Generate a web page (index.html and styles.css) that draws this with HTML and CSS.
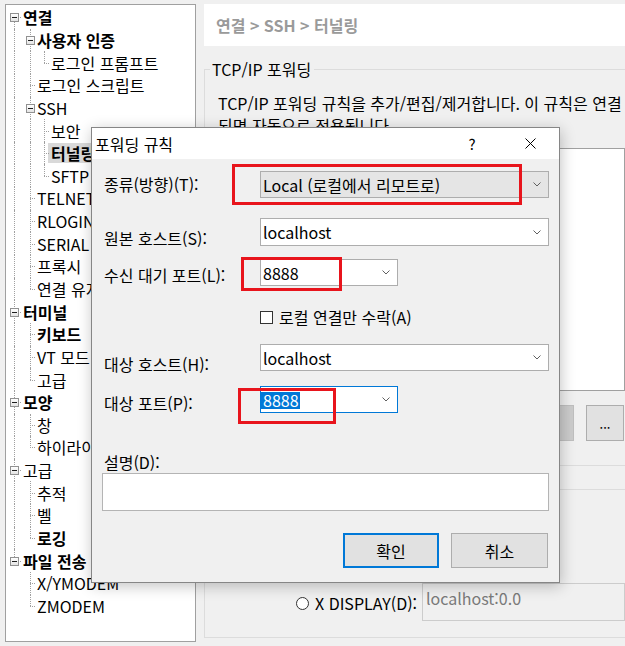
FILE: index.html
```html
<!DOCTYPE html>
<html lang="ko">
<head>
<meta charset="utf-8">
<title>터널링</title>
<link rel="stylesheet" href="styles.css">
</head>
<body>
<div class="window">
  <aside class="tree">
    <div class="r b"><span class="c c0 first"><i class="box"></i></span><span class="t">연결</span></div>
    <div class="r b"><span class="c c0 pipe"></span><span class="c c1 tee"><i class="box"></i></span><span class="t">사용자 인증</span></div>
    <div class="r"><span class="c c0 pipe"></span><span class="c c1 pipe"></span><span class="c c2 ell"></span><span class="t">로그인 프롬프트</span></div>
    <div class="r"><span class="c c0 pipe"></span><span class="c c1 tee"></span><span class="t">로그인 스크립트</span></div>
    <div class="r"><span class="c c0 pipe"></span><span class="c c1 tee"><i class="box"></i></span><span class="t">SSH</span></div>
    <div class="r"><span class="c c0 pipe"></span><span class="c c1 pipe"></span><span class="c c2 tee"></span><span class="t">보안</span></div>
    <div class="r b sel"><span class="c c0 pipe"></span><span class="c c1 pipe"></span><span class="c c2 tee"></span><span class="t">터널링</span></div>
    <div class="r"><span class="c c0 pipe"></span><span class="c c1 pipe"></span><span class="c c2 ell"></span><span class="t">SFTP</span></div>
    <div class="r"><span class="c c0 pipe"></span><span class="c c1 tee"></span><span class="t">TELNET</span></div>
    <div class="r"><span class="c c0 pipe"></span><span class="c c1 tee"></span><span class="t">RLOGIN</span></div>
    <div class="r"><span class="c c0 pipe"></span><span class="c c1 tee"></span><span class="t">SERIAL</span></div>
    <div class="r"><span class="c c0 pipe"></span><span class="c c1 tee"></span><span class="t">프록시</span></div>
    <div class="r"><span class="c c0 pipe"></span><span class="c c1 ell"></span><span class="t">연결 유지</span></div>
    <div class="r b"><span class="c c0 tee"><i class="box"></i></span><span class="t">터미널</span></div>
    <div class="r b"><span class="c c0 pipe"></span><span class="c c1 tee"></span><span class="t">키보드</span></div>
    <div class="r"><span class="c c0 pipe"></span><span class="c c1 tee"></span><span class="t">VT 모드</span></div>
    <div class="r"><span class="c c0 pipe"></span><span class="c c1 ell"></span><span class="t">고급</span></div>
    <div class="r b"><span class="c c0 tee"><i class="box"></i></span><span class="t">모양</span></div>
    <div class="r"><span class="c c0 pipe"></span><span class="c c1 tee"></span><span class="t">창</span></div>
    <div class="r"><span class="c c0 pipe"></span><span class="c c1 ell"></span><span class="t">하이라이트</span></div>
    <div class="r"><span class="c c0 tee"><i class="box"></i></span><span class="t">고급</span></div>
    <div class="r"><span class="c c0 pipe"></span><span class="c c1 tee"></span><span class="t">추적</span></div>
    <div class="r"><span class="c c0 pipe"></span><span class="c c1 tee"></span><span class="t">벨</span></div>
    <div class="r b"><span class="c c0 pipe"></span><span class="c c1 ell"></span><span class="t">로깅</span></div>
    <div class="r b"><span class="c c0 ell"><i class="box"></i></span><span class="t">파일 전송</span></div>
    <div class="r"><span class="c c0"></span><span class="c c1 tee"></span><span class="t">X/YMODEM</span></div>
    <div class="r"><span class="c c0"></span><span class="c c1 ell"></span><span class="t">ZMODEM</span></div>
  </aside>

  <main class="panel">
    <div class="crumb">연결 &gt; SSH &gt; 터널링</div>

    <fieldset class="grp g1">
      <legend>TCP/IP 포워딩</legend>
      <p class="desc">TCP/IP 포워딩 규칙을 추가/편집/제거합니다. 이 규칙은 연결<br>되면 자동으로 적용됩니다.</p>
      <div class="listview"></div>
      <div class="pbtns">
        <button class="pbtn">추가(A)...</button>
        <button class="pbtn">편집(E)...</button>
        <button class="pbtn dis">제거(R)</button>
        <button class="pbtn more">...</button>
      </div>
    </fieldset>

    <fieldset class="grp g2">
      <legend>X11 포워딩</legend>
      <div class="opt"><span class="cbox"></span><span>X11 연결을 다음으로 전달(X)</span></div>
      <div class="opt sub"><span class="radio"></span><span>Xmanager(M)</span></div>
      <div class="xrow">
        <div class="xopt"><span class="radio"></span><span>X DISPLAY(D):</span></div>
        <div class="xbox">localhost:0.0</div>
      </div>
    </fieldset>
  </main>
</div>

<div class="dialog">
  <div class="dlg-title">
    <span class="dlg-name">포워딩 규칙</span>
    <span class="tbtn">?</span>
    <span class="tbtn"><svg width="11" height="11" viewBox="0 0 11 11"><path d="M0.5 0.5L10.5 10.5M10.5 0.5L0.5 10.5" stroke="#000" stroke-width="1" fill="none"/></svg></span>
  </div>
  <div class="dlg-body">
    <div class="frow f1">
      <span class="lbl">종류(방향)(T):</span>
      <div class="combo ro wide"><span class="val">Local (로컬에서 리모트로)</span><svg class="chev" width="8" height="5" viewBox="0 0 8 5"><path d="M0.5 0.5L4 4L7.5 0.5" stroke="#606060" fill="none"/></svg></div>
    </div>
    <div class="frow f2">
      <span class="lbl">원본 호스트(S):</span>
      <div class="combo wide tall"><span class="val">localhost</span><svg class="chev" width="8" height="5" viewBox="0 0 8 5"><path d="M0.5 0.5L4 4L7.5 0.5" stroke="#606060" fill="none"/></svg></div>
    </div>
    <div class="frow f3">
      <span class="lbl">수신 대기 포트(L):</span>
      <div class="combo short"><span class="val">8888</span><svg class="chev" width="8" height="5" viewBox="0 0 8 5"><path d="M0.5 0.5L4 4L7.5 0.5" stroke="#606060" fill="none"/></svg></div>
    </div>
    <div class="frow f4">
      <span class="cbox"></span><span class="chklbl">로컬 연결만 수락(A)</span>
    </div>
    <div class="frow f5">
      <span class="lbl">대상 호스트(H):</span>
      <div class="combo wide"><span class="val">localhost</span><svg class="chev" width="8" height="5" viewBox="0 0 8 5"><path d="M0.5 0.5L4 4L7.5 0.5" stroke="#606060" fill="none"/></svg></div>
    </div>
    <div class="frow f6">
      <span class="lbl">대상 포트(P):</span>
      <div class="combo short focus"><span class="val"><span class="hl">8888</span></span><svg class="chev" width="8" height="5" viewBox="0 0 8 5"><path d="M0.5 0.5L4 4L7.5 0.5" stroke="#606060" fill="none"/></svg></div>
    </div>
    <div class="memo-lbl">설명(D):</div>
    <div class="memo"></div>
    <div class="dbtns">
      <button class="dbtn def">확인</button>
      <button class="dbtn">취소</button>
    </div>
  </div>
  <div class="mark m1"></div>
  <div class="mark m2"></div>
  <div class="mark m3"></div>
</div>
</body>
</html>
```

FILE: styles.css
```css
* { box-sizing: border-box; }
html, body { margin: 0; padding: 0; }
body {
  width: 625px;
  height: 646px;
  overflow: hidden;
  position: relative;
  background: #f0f0f0;
  font-family: "Noto Sans CJK KR", sans-serif;
  font-size: 16px;
  color: #000;
}

.window {
  display: flex;
  align-items: flex-start;
  padding-top: 4px;
  width: 625px;
}

/* ---------- tree ---------- */
.tree {
  flex: none;
  margin-left: 5px;
  width: 191px;
  height: 638px;
  background: #fff;
  border: 1px solid #a0a0a0;
  padding-top: 1px;
  overflow: hidden;
}
.r {
  display: flex;
  height: 22.65px;
  white-space: nowrap;
}
.r.b { font-weight: 700; }
.c { position: relative; flex: none; }
.c0 { width: 17px; --x: 8px; }
.c1, .c2 { width: 14px; --x: 7px; }
.c::before {
  content: "";
  position: absolute;
  left: var(--x);
  top: 0;
  bottom: 0;
  border-left: 1px dotted #a0a0a0;
  display: none;
}
.pipe::before, .tee::before { display: block; }
.ell::before { display: block; bottom: 50%; }
.first::before { display: block; top: 50%; }
.tee::after, .ell::after, .first::after {
  content: "";
  position: absolute;
  left: var(--x);
  right: 2px;
  top: 50%;
  border-top: 1px dotted #a0a0a0;
}
.box {
  position: absolute;
  z-index: 1;
  left: calc(var(--x) - 4px);
  top: 50%;
  margin-top: -4px;
  width: 9px;
  height: 9px;
  border: 1px solid #919191;
  background: linear-gradient(#ffffff, #e4e4e4);
}
.box::after {
  content: "";
  position: absolute;
  left: 1px;
  top: 3px;
  width: 5px;
  height: 1px;
  background: #1e1e1e;
}
.t {
  align-self: center;
  line-height: 20px;
}
.sel .t {
  background: #d9d9d9;
  margin-left: -3px;
  padding: 0 3px;
}

/* ---------- right panel ---------- */
.panel {
  flex: none;
  width: 421px;
  margin-left: 8px;
}
.crumb {
  height: 42px;
  line-height: 42px;
  background: #fff;
  padding-left: 12px;
  font-weight: 700;
  color: #9a9a9a;
}
.grp {
  margin: 13px 0 0;
  min-width: 0;
  border: 1px solid #dcdcdc;
  border-right: none;
  padding: 13px 0 24px 13px;
}
.grp legend {
  margin-left: -8px;
  padding: 0 3px 0 2px;
  line-height: 20px;
}
.desc {
  margin: 0;
  line-height: 22px;
  white-space: nowrap;
}
.listview {
  margin-top: 12px;
  width: 407px;
  height: 243px;
  background: #fff;
  border: 1px solid #a0a0a0;
}
.pbtns {
  margin-top: 14px;
  width: 406px;
  display: flex;
  justify-content: flex-end;
  gap: 12px;
}
.pbtn {
  width: 100px;
  height: 36px;
  background: #e1e1e1;
  border: 1px solid #adadad;
  font: inherit;
  color: #000;
  padding: 0;
}
.pbtn.dis {
  background: #cccccc;
  border-color: #bfbfbf;
  color: #838383;
}
.pbtn.more { width: 38px; line-height: 1; font-size: 13px; }

.g2 { padding-bottom: 16px; }
.opt {
  display: flex;
  align-items: center;
  gap: 6px;
  height: 20px;
  line-height: 20px;
}
.opt.sub { margin-top: 14px; padding-left: 20px; }
.xrow {
  margin-top: 17px;
  width: 407px;
  height: 38px;
  display: flex;
}
.xopt {
  padding-left: 78px;
  padding-top: 10px;
  display: flex;
  align-items: center;
  gap: 6px;
  height: 30px;
  line-height: 20px;
}
.radio {
  flex: none;
  width: 13px;
  height: 13px;
  border: 1px solid #333;
  border-radius: 50%;
  background: #fff;
}
.cbox {
  flex: none;
  width: 13px;
  height: 13px;
  border: 1px solid #333;
  background: #fff;
}
.xbox {
  margin-left: auto;
  width: 203px;
  height: 38px;
  border: 1px solid #cccccc;
  background: #f0f0f0;
  color: #7a7a7a;
  padding: 4px 3px;
  line-height: 20px;
}

/* ---------- dialog ---------- */
.dialog {
  position: absolute;
  left: 91px;
  top: 127px;
  width: 469px;
  height: 456px;
  border: 1px solid #868686;
  background: #f0f0f0;
  box-shadow: 1px 3px 14px rgba(0, 0, 0, 0.24);
}
.dlg-title {
  height: 31px;
  background: #fff;
  display: flex;
  align-items: center;
  padding-left: 3px;
}
.dlg-name { flex: 1; line-height: 20px; }
.tbtn {
  width: 58px;
  height: 31px;
  display: flex;
  align-items: center;
  justify-content: center;
  font-size: 15px;
  color: #000;
}
.dlg-body {
  padding: 12px 10px 0 12px;
}
.frow {
  display: flex;
  align-items: flex-start;
  height: 27px;
}
.lbl {
  flex: none;
  width: 156px;
  line-height: 20px;
  white-space: nowrap;
}
.f1 .lbl { padding-top: 3px; }
.f2 { margin-top: 20px; height: 28px; }
.f2 .lbl { padding-top: 10px; }
.f3 { margin-top: 13px; }
.f3 .lbl { padding-top: 6px; }
.f4 {
  margin-top: 21px;
  height: 20px;
  align-items: center;
  padding-left: 156px;
}
.chklbl { margin-left: 6px; line-height: 20px; }
.f5 { margin-top: 17px; }
.f5 .lbl { padding-top: 10px; }
.f6 { margin-top: 15px; }
.f6 .lbl { padding-top: 7px; }

.combo {
  flex: none;
  display: flex;
  align-items: center;
  height: 27px;
  border: 1px solid #adadad;
  background: #fff;
  padding-left: 2px;
  white-space: nowrap;
}
.combo .val { flex: 1; line-height: 20px; }
.combo .chev { flex: none; margin-right: 7px; }
.combo.wide { width: 289px; }
.combo.short { width: 138px; }
.combo.tall { height: 28px; }
.combo.ro { background: #e5e5e5; }
.combo.focus { border-color: #0078d7; }
.hl {
  background: #0078d7;
  color: #fff;
  margin-left: -2px;
  padding: 0 1px 0 2px;
  line-height: 17px;
  display: inline-block;
}

.memo-lbl {
  margin-top: 39px;
  line-height: 20px;
}
.memo {
  margin-top: 1px;
  margin-left: -2px;
  width: 447px;
  height: 38px;
  background: #fff;
  border: 1px solid #b4b4b4;
}
.dbtns {
  margin-top: 22px;
  display: flex;
  justify-content: flex-end;
  gap: 12px;
  padding-right: 1px;
}
.dbtn {
  width: 97px;
  height: 35px;
  background: #e1e1e1;
  border: 1px solid #adadad;
  font: inherit;
  color: #000;
  padding: 0;
}
.dbtn.def {
  width: 96px;
  border: 2px solid #0078d7;
}

.mark {
  position: absolute;
  border: 3px solid #e8141c;
}
.m1 { left: 140px; top: 36px; width: 290px; height: 41px; }
.m2 { left: 149px; top: 129px; width: 101px; height: 34px; }
.m3 { left: 146px; top: 260px; width: 98px; height: 36px; }
```
